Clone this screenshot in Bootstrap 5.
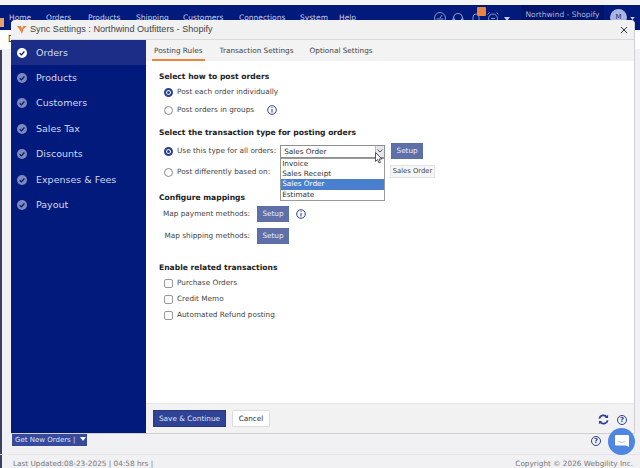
<!DOCTYPE html>
<html lang="en">
<head>
  <meta charset="UTF-8">
  <meta name="viewport" content="width=device-width, initial-scale=1">
  <title>Sync Settings - Webgility</title>
  <link href="https://cdn.jsdelivr.net/npm/bootstrap@5.3.0/dist/css/bootstrap.min.css" rel="stylesheet">
  <style>
    html, body { height: 468px; overflow: hidden; }
    body { position: relative; background: #f1f1f3; font-family: "DejaVu Sans", sans-serif; font-size: 8px; color: #3a3a3a; }
    .top-strip { height: 5px; background: #f4f4f4; }
    .main-nav { height: 25px; padding: 0; align-items: flex-start; background: #011a7c; }
    .main-links { padding-top: 7px; font-size: 7.5px; color: #c4cde8; }
    .main-links span { position: absolute; }
    .nav-right { margin-left: auto; height: 25px; align-items: flex-start; padding-right: 5px; }
    .nav-icon { width: 14px; height: 14px; margin-top: 6px; color: #8595c8; }
    .bell-badge { position: absolute; left: 477px; top: 7px; width: 9px; height: 9px; background: #e8863f; border-radius: 1px; }
    .store-box { width: 83px; height: 17px; margin-left: 11px; background: #00146a; color: #a9b6dc; font-size: 7.5px; line-height: 20px; text-align: center; }
    .avatar-dot { width: 17px; height: 17px; margin: 4px 3px 0 6px; border-radius: 50%; background: #a9b7e0; color: #1c2a70; font-size: 7px; line-height: 17px; text-align: center; }
    .sub-bar { height: 19px; background: #fff; padding: 5px 0 0 8px; font-size: 8px; line-height: 10px; color: #333; }
    .left-edge { position: absolute; left: 0; top: 50px; bottom: 0; width: 2px; background: #39415f; }
    .left-tag { position: absolute; left: 0; top: 18px; width: 4px; height: 9px; background: #e8a06a; }

    .sync-dialog { position: absolute; left: 11px; top: 20px; width: 624px; height: 414px; border: 0; border-right: 1px solid #cfcfd4; border-bottom: 1px solid #cfcfd4; border-radius: 4px 4px 0 0; overflow: hidden; }
    .sync-head { height: 20px; flex: none; padding: 0 6px; background: #f1f1f2; border-bottom: 1px solid #d9d9dd; font-family: "Liberation Sans", sans-serif; font-size: 9.15px; color: #444; }
    .sync-head svg.logo { margin-right: 3px; }
    .sync-body { height: 393px; }
    .side-steps { width: 135px; background: #011a7c; flex: none; align-content: flex-start; }
    .side-steps .nav-link { height: 25.4px; padding: 0 0 0 6px; display: flex; align-items: center; gap: 9px; color: #d3d9ee; font-size: 9.5px; border-radius: 0; }
    .side-steps .nav-link.active { background: #1b2d86; color: #d8deef; }
    .side-steps svg { color: #7d88bd; }
    .side-steps .active svg { color: #fff; }

    .tab-strip { height: 21px; padding-left: 6px; background: #f3f3f4; border: 0; gap: 16px; flex: none; }
    .tab-strip .nav-link { padding: 0; height: 21px; line-height: 21px; border: 0; border-radius: 0; color: #444; font-size: 7.3px; background: none; }
    .tab-strip .nav-link.active { padding: 0 2px; margin-right: -1px; background: none; color: #444; border-bottom: 2px solid #e8863f; }

    .sync-form { padding: 10px 0 0 13px; flex: 1; background: #fff; position: relative; }
    .form-title { height: 12px; line-height: 12px; margin: 0; font-size: 7.6px; font-weight: 700; color: #222; }
    .t-2 { margin-top: 8px; }
    .t-3 { margin-top: 11px; }
    .t-4 { margin-top: 18px; }
    .opt-row { height: 18px; padding-left: 5px; gap: 4px; font-size: 7.3px; color: #444; margin: 0; min-height: 0; }
    .opt-row .form-check-input { width: 9px; height: 9px; margin: 0; float: none; border: 1px solid #8a8a8a; flex: none; }
    .opt-row .form-check-input:checked { border: 2.5px solid #2a3f96; background-image: none; box-shadow: inset 0 0 0 1px #fff; background-color: #2a3f96; }
    .opt-row input[type=checkbox] { border-radius: 2px; border-color: #999; }
    .check-row { height: 16px; }
    .gap-3px { margin-top: 3px; }
    .gap-2px { margin-top: 2px; }
    .gap-1px { margin-top: 1px; }
    .i-mark { width: 10px; height: 10px; color: #2a3f96; flex: none; }
    .ml-info { margin-left: 9px; }

    .type-pick { position: relative; width: 105px; height: 13px; border: 1px solid #8f8f8f; background: #fff; font-size: 7.3px; line-height: 11px; padding-left: 3px; color: #333; }
    .type-arrow { position: absolute; right: 0; top: 0; bottom: 0; width: 9px; background: #e4e6ec; border-left: 1px solid #b9bcc8; display: flex; align-items: center; justify-content: center; }
    .type-list { min-width: 0; width: 105px; left: -1px; top: 12px; padding: 0; margin: 0; border: 1px solid #9a9a9a; border-radius: 0; font-size: 7.3px; z-index: 3; }
    .type-list .dropdown-item { height: 10.4px; line-height: 10.4px; padding: 0 1px; color: #333; }
    .type-list .dropdown-item.active { background: #4a7fd0; color: #fff; }
    .setup-btn { width: 32px; height: 16px; padding: 0; border: 1px solid #5c6ea6; border-radius: 0; background: #5f70a8; color: #e8ebf5; font-size: 7.3px; line-height: 14px; }
    .setup-btn:hover { background: #5f70a8; color: #e8ebf5; }
    .row-setup { margin-left: 2px; }
    .pick-tip { position: absolute; left: 244px; top: 104px; width: 45px; height: 13px; background: #f6f6f6; border: 1px solid #e3e3e3; font-size: 6.8px; line-height: 11px; text-align: center; color: #444; }
    .map-row { height: 16px; gap: 7px; font-size: 7.3px; color: #444; }
    .map-row + .map-row { margin-top: 6px; }
    .map-label { width: 91px; text-align: right; }
    .cursor-mark { position: absolute; left: 229px; top: 91px; z-index: 4; }

    .sync-foot { height: 30px; flex: none; padding: 0 7px 0 7px; background: #f2f2f3; border-top: 1px solid #e6e6e8; border-radius: 0; }
    .save-btn { width: 73px; height: 17px; padding: 0; border-radius: 0; border: 1px solid #27387f; background: #2f4296; color: #dfe4f3; font-size: 7.3px; line-height: 15px; }
    .cancel-btn { width: 38px; height: 17px; padding: 0; margin-left: 6px; border-radius: 1px; border: 1px solid #ddd; background: #fff; color: #333; font-size: 7.3px; line-height: 15px; }
    .foot-icon { margin-top: 2px; }
    .help-ring { width: 10px; height: 10px; border: 1.3px solid #2a3f96; border-radius: 50%; color: #2a3f96; font-size: 7px; line-height: 8px; text-align: center; font-weight: 700; display: inline-block; }

    .get-orders { position: absolute; left: 12px; top: 434px; width: 75px; height: 12px; padding: 0 0 0 3px; border-radius: 0; border: 0; background: #36499c; color: #dfe4f3; font-size: 7px; line-height: 11px; text-align: left; }
    .get-orders svg { margin-left: 2px; vertical-align: 1px; }
    .page-help { position: absolute; left: 591px; top: 436px; }
    .chat-bubble { position: absolute; left: 608px; top: 428px; width: 27px; height: 27px; border-radius: 50%; background: #4f86e4; display: flex; align-items: center; justify-content: center; z-index: 5; }
    .page-foot { position: absolute; left: 0; right: 0; top: 454px; height: 14px; padding: 4px 7px 0 13px; border-top: 1px solid #e6e6e8; font-size: 7.3px; color: #777; }
  </style>
</head>
<body>

<svg width="0" height="0" class="position-absolute">
  <symbol id="step-ok" viewBox="0 0 10 10">
    <circle cx="5" cy="5" r="5" fill="currentColor"/>
    <path d="M2.7 5.2 4.4 6.9 7.4 3.5" fill="none" stroke="#011a7c" stroke-width="1.3"/>
  </symbol>
  <symbol id="info-ring" viewBox="0 0 10 10">
    <circle cx="5" cy="5" r="4.3" fill="none" stroke="currentColor" stroke-width="1"/>
    <rect x="4.5" y="2.2" width="1" height="1" fill="currentColor"/>
    <rect x="4.5" y="4" width="1" height="3.6" fill="currentColor"/>
  </symbol>
</svg>

<div class="top-strip"></div>
<nav class="navbar main-nav">
  <div class="main-links d-flex">
    <span style="left:9px">Home</span>
    <span style="left:46px">Orders</span>
    <span style="left:88px">Products</span>
    <span style="left:136px">Shipping</span>
    <span style="left:183px">Customers</span>
    <span style="left:239px">Connections</span>
    <span style="left:300px">System</span>
    <span style="left:339px">Help</span>
  </div>
  <div class="nav-right d-flex">
    <svg class="nav-icon" viewBox="0 0 14 14" fill="none" stroke="currentColor"><circle cx="7" cy="7" r="5.5"/><path d="M7 7 9 4M3.5 8h7"/></svg>
    <svg class="nav-icon ms-1" viewBox="0 0 14 14" fill="none" stroke="currentColor" stroke-width="1.2"><path d="M2.5 9V7a4.5 4.5 0 0 1 9 0v2"/><path d="M2 8h1.5v3H2zM10.500 8H12v3h-1.500z"/></svg>
    <svg class="nav-icon ms-1" viewBox="0 0 14 14" fill="none" stroke="currentColor"><path d="M4 11V6a3 3 0 0 1 6 0v5M3 11h8"/></svg>
    <svg class="nav-icon" viewBox="0 0 14 14" fill="none" stroke="currentColor" style="margin-left:3px"><circle cx="7" cy="7.500" r="4.500"/><path d="M1.500 3.500 3.500 1.500M12.500 3.500l-2-2M5 7.500h4"/></svg>
    <svg width="6" height="4" viewBox="0 0 6 4" style="margin:12px 0 0 4px"><path d="M0 0h6L3 4z" fill="#c4cde8"/></svg>
    <div class="store-box">Northwind - Shopify</div>
    <div class="avatar-dot">M</div>
    <svg width="5" height="3" viewBox="0 0 6 4" style="margin-top:12px"><path d="M0 0h6L3 4z" fill="#c4cde8"/></svg>
  </div>
</nav>
<div class="sub-bar">D</div>
<span class="bell-badge"></span>
<div class="left-tag"></div>
<div class="left-edge"></div>

<div class="card sync-dialog">
  <div class="card-header sync-head d-flex align-items-center">
    <svg class="logo" width="10" height="8" viewBox="0 0 10 8"><path d="M0 0h4l1 3 1-3h4L6.500 3 5 8 3.500 5z" fill="#e8863f"/></svg>
    <span class="flex-grow-1">Sync Settings : Northwind Outfitters - Shopify</span>
    <svg width="8" height="8" viewBox="0 0 8 8"><path d="M1 1l6 6M7 1 1 7" stroke="#333" stroke-width="1"/></svg>
  </div>
  <div class="sync-body d-flex">
    <div class="side-steps nav flex-column flex-nowrap">
      <a class="nav-link active" href="#"><svg width="10" height="10"><use href="#step-ok"/></svg>Orders</a>
      <a class="nav-link" href="#"><svg width="10" height="10"><use href="#step-ok"/></svg>Products</a>
      <a class="nav-link" href="#"><svg width="10" height="10"><use href="#step-ok"/></svg>Customers</a>
      <a class="nav-link" href="#"><svg width="10" height="10"><use href="#step-ok"/></svg>Sales Tax</a>
      <a class="nav-link" href="#"><svg width="10" height="10"><use href="#step-ok"/></svg>Discounts</a>
      <a class="nav-link" href="#"><svg width="10" height="10"><use href="#step-ok"/></svg>Expenses &amp; Fees</a>
      <a class="nav-link" href="#"><svg width="10" height="10"><use href="#step-ok"/></svg>Payout</a>
    </div>
    <div class="d-flex flex-column flex-grow-1">
      <ul class="nav nav-tabs tab-strip">
        <li class="nav-item"><a class="nav-link active" href="#">Posting Rules</a></li>
        <li class="nav-item"><a class="nav-link" href="#">Transaction Settings</a></li>
        <li class="nav-item"><a class="nav-link" href="#">Optional Settings</a></li>
      </ul>
      <form class="sync-form">
        <h6 class="form-title">Select how to post orders</h6>
        <label class="form-check opt-row d-flex align-items-center"><input class="form-check-input" type="radio" name="post" checked>Post each order individually</label>
        <div class="form-check opt-row d-flex align-items-center"><input class="form-check-input" type="radio" name="post"><span>Post orders in groups</span><svg class="i-mark ml-info"><use href="#info-ring"/></svg></div>

        <h6 class="form-title t-2">Select the transaction type for posting orders</h6>
        <div class="form-check opt-row d-flex align-items-center gap-3px">
          <input class="form-check-input" type="radio" name="type" checked>
          <span>Use this type for all orders:</span>
          <div class="type-pick">Sales Order
            <span class="type-arrow"><svg width="6" height="4" viewBox="0 0 6 4"><path d="M.5.5 3 3 5.500.5" fill="none" stroke="#555"/></svg></span>
            <div class="dropdown-menu show type-list">
              <a class="dropdown-item" href="#">Invoice</a>
              <a class="dropdown-item" href="#">Sales Receipt</a>
              <a class="dropdown-item active" href="#">Sales Order</a>
              <a class="dropdown-item" href="#">Estimate</a>
            </div>
          </div>
          <button type="button" class="btn setup-btn row-setup">Setup</button>
        </div>
        <label class="form-check opt-row d-flex align-items-center gap-3px"><input class="form-check-input" type="radio" name="type">Post differently based on:</label>
        <div class="pick-tip">Sales Order</div>
        <svg class="cursor-mark" width="8" height="12" viewBox="0 0 8 12"><path d="M.5.5v9l2-2 1.500 3.500 1.500-.6L4 7h3z" fill="#fff" stroke="#333" stroke-width=".8"/></svg>

        <h6 class="form-title t-3">Configure mappings</h6>
        <div class="gap-2px">
          <div class="map-row d-flex align-items-center"><span class="map-label">Map payment methods:</span><button type="button" class="btn setup-btn">Setup</button><svg class="i-mark"><use href="#info-ring"/></svg></div>
          <div class="map-row d-flex align-items-center"><span class="map-label">Map shipping methods:</span><button type="button" class="btn setup-btn">Setup</button></div>
        </div>

        <h6 class="form-title t-4">Enable related transactions</h6>
        <div class="gap-1px">
          <label class="form-check opt-row check-row d-flex align-items-center"><input class="form-check-input" type="checkbox">Purchase Orders</label>
          <label class="form-check opt-row check-row d-flex align-items-center"><input class="form-check-input" type="checkbox">Credit Memo</label>
          <label class="form-check opt-row check-row d-flex align-items-center"><input class="form-check-input" type="checkbox">Automated Refund posting</label>
        </div>
      </form>
      <div class="card-footer sync-foot d-flex align-items-center">
        <button type="button" class="btn save-btn">Save &amp; Continue</button>
        <button type="button" class="btn cancel-btn">Cancel</button>
        <svg class="ms-auto foot-icon" width="11" height="11" viewBox="0 0 12 12" fill="none" stroke="#2a3f96" stroke-width="1.800"><path d="M1.500 5A4.600 4.600 0 0 1 9.800 3.500"/><path d="M10.500 7A4.600 4.600 0 0 1 2.200 8.500"/><path d="M11 .8v3.600H7.500z" fill="#2a3f96" stroke="none"/><path d="M1 11.200V7.600h3.500z" fill="#2a3f96" stroke="none"/></svg>
        <span class="help-ring ms-2 foot-icon">?</span>
      </div>
    </div>
  </div>
</div>

<button type="button" class="btn get-orders">Get New Orders | <svg width="6" height="4" viewBox="0 0 6 4"><path d="M0 0h6L3 4z" fill="#fff"/></svg></button>
<span class="help-ring page-help">?</span>
<div class="chat-bubble"><svg width="14" height="13" viewBox="0 0 14 13"><path d="M1 0h12a1 1 0 0 1 1 1v11l-3-1.500H1a1 1 0 0 1-1-1V1a1 1 0 0 1 1-1z" fill="#fff"/><path d="M3.500 6.500q3.500 2 7 0" fill="none" stroke="#9db9ee" stroke-width=".9"/></svg></div>
<footer class="page-foot d-flex justify-content-between">
  <span>Last Updated:08-23-2025 | 04:58 hrs |</span>
  <span>Copyright © 2026 Webgility Inc.</span>
</footer>

<script src="https://cdn.jsdelivr.net/npm/bootstrap@5.3.0/dist/js/bootstrap.bundle.min.js"></script>
</body>
</html>
